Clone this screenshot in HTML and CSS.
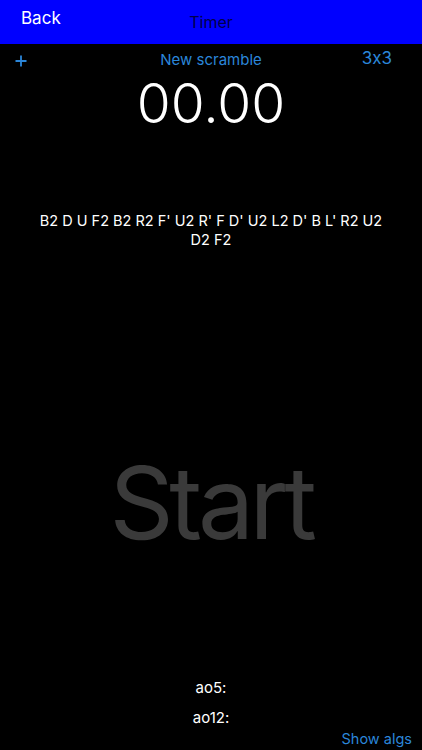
FILE: index.html
```html
<!DOCTYPE html>
<html>
<head>
<meta charset="utf-8">
<link rel="stylesheet" href="styles.css">
</head>
<body>
<div class="screen">
  <header class="navbar">
    <span class="back">Back</span>
    <span class="title">Timer</span>
  </header>
  <div class="toolbar">
    <svg class="plus" width="12" height="12" viewBox="0 0 12 12"><path d="M6 0.5V11.5M0.5 6H11.5" stroke="#2b86d9" stroke-width="1.8" fill="none"/></svg>
    <span class="new">New scramble</span>
    <span class="cube">3x3</span>
  </div>
  <div class="time">00.00</div>
  <div class="scramble">B2 D U F2 B2 R2 F' U2 R' F D' U2 L2 D' B L' R2 U2 D2 F2</div>
  <div class="start">Start</div>
  <div class="stats">
    <div class="ao">ao5:</div>
    <div class="ao ao12">ao12:</div>
  </div>
  <div class="footer"><span class="algs">Show algs</span></div>
</div>
</body>
</html>
```
FILE: styles.css
```css
html, body {
  margin: 0;
  padding: 0;
  background: #000;
}
body {
  font-family: Inter, "Liberation Sans", sans-serif;
  font-feature-settings: "calt" 0;
  color: #fff;
}
.screen {
  width: 422px;
  height: 750px;
  display: flex;
  flex-direction: column;
  overflow: hidden;
}
.navbar {
  height: 44px;
  background: #0000ff;
  display: grid;
  grid-template-columns: 1fr auto 1fr;
  align-items: start;
}
.back {
  grid-column: 1;
  justify-self: start;
  margin-left: 21px;
  margin-top: 8px;
  font-size: 17px;
  color: #fff;
}
.title {
  grid-column: 2;
  margin-top: 12px;
  font-size: 16px;
  color: #00004a;
}
.toolbar {
  height: 30px;
  display: grid;
  grid-template-columns: 1fr auto 1fr;
  align-items: center;
  color: #2b86d9;
}
.plus {
  justify-self: start;
  margin-left: 15px;
  margin-top: 4px;
}
.new {
  font-size: 15px;
}
.cube {
  justify-self: end;
  margin-right: 30px;
  font-size: 17px;
  margin-top: -3px;
}
.time {
  text-align: center;
  font-size: 55px;
  font-weight: 300;
  line-height: 60px;
  margin-top: -1px;
}
.scramble {
  margin: 78px auto 0;
  width: 360px;
  text-align: center;
  font-size: 14.5px;
  line-height: 19px;
}
.start {
  margin-top: 204px;
  text-align: center;
  font-size: 100px;
  line-height: 100px;
  color: #3a3a3a;
  letter-spacing: -4.5px;
}
.stats {
  margin-top: auto;
  display: flex;
  flex-direction: column;
  align-items: center;
}
.ao {
  font-size: 15px;
  line-height: 20px;
}
.ao12 {
  margin-top: 10px;
}
.footer {
  display: flex;
  justify-content: flex-end;
  height: 22px;
}
.algs {
  font-size: 14.5px;
  color: #2b86d9;
  margin-right: 10px;
  margin-top: 2px;
}
```
